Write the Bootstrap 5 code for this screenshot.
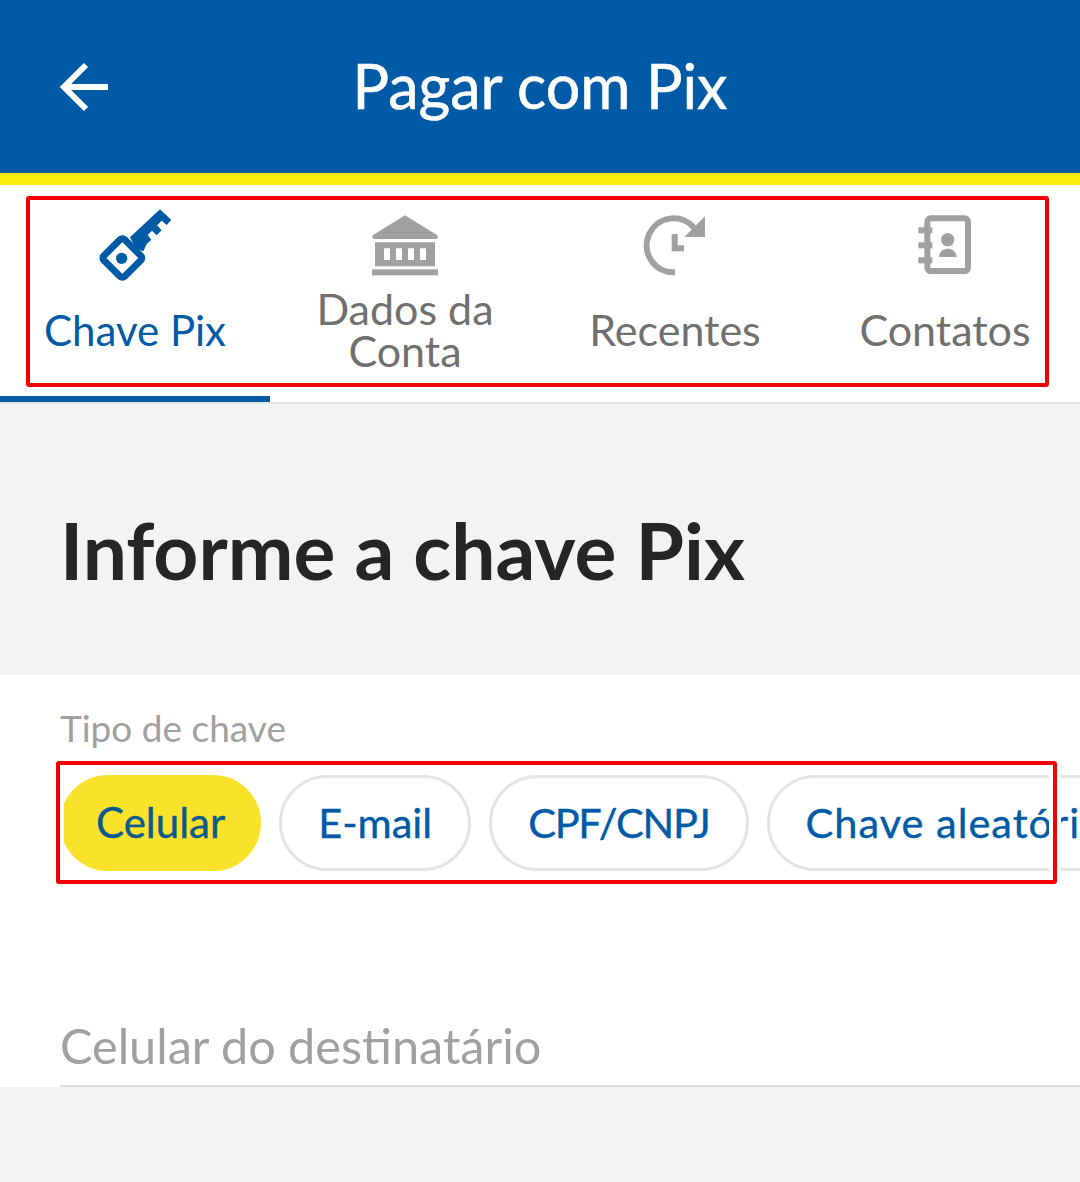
<!DOCTYPE html>
<html lang="pt-BR">
<head>
    <meta charset="UTF-8">
    <title>Pagar com Pix</title>
    <link rel="stylesheet" href="https://cdn.jsdelivr.net/npm/bootstrap@5.3.0/dist/css/bootstrap.min.css">
    <style>
        body { background-color: #f3f3f3; font-family: "Lato", "Liberation Sans", sans-serif; width: 1080px; height: 1182px; overflow: hidden; position: relative; }
        .pix-header { height: 185px; background-color: #005aa6; border-bottom: 12px solid #fcee0a; color: #fff; position: relative; }
        .pix-back { position: absolute; left: 60px; top: 62px; }
        .pix-title { font-size: 61px; line-height: 172px; margin: 0; font-weight: 400; -webkit-text-stroke: .6px #fff; }
        .pix-tabs { height: 219px; background-color: #fff; border-bottom: 2px solid #e3e3e3; }
        .pix-tab { width: 270px; height: 217px; color: #707070; font-size: 43px; line-height: 42px; padding-top: 23px; border-bottom: 6px solid transparent; }
        .pix-tab.is-active { color: #005aa6; border-bottom-color: #005aa6; font-size: 42px; }
        .pix-tab svg { display: block; flex: none; }
        .pix-tab-label { height: 84px; margin-top: 5px; }
        .pix-heading { height: 271px; padding: 22px 60px 0; font-size: 78.5px; font-weight: 700; color: #252525; margin: 0; }
        .pix-form { height: 412px; background-color: #fff; padding-left: 60px; overflow: hidden; }
        .pix-label { font-size: 37px; line-height: 40px; color: #a0a0a0; padding-top: 33px; box-sizing: content-box; height: 40px; }
        .pix-pills { margin-top: 27px; gap: 18px; width: max-content; }
        .pix-pill { height: 96px; border-radius: 48px; border: 3px solid #e4e4e4; background: #fff; color: #005aa6; font-size: 41.5px; padding: 0 36px 1px; white-space: nowrap; -webkit-text-stroke: .4px #005aa6; }
        .pix-pill.is-on { background-color: #fae12a; border-color: #fae12a; color: #0b5a8c; font-size: 42px; padding: 0 33px 1px; -webkit-text-stroke-color: #0b5a8c; }
        .pix-pill-tight { letter-spacing: -1.2px; }
        .pix-pill-wide { letter-spacing: 1px; }
        .pix-field { margin-top: 139px; font-size: 48.6px; color: #a0a0a0; border-bottom: 2px solid #dcdcdc; line-height: 70px; height: 77px; }
        .pix-mark { position: absolute; border: 4px solid #f20000; border-radius: 3px; box-shadow: 0 0 0 4px #fff, inset 0 0 0 4px #fff; }
        .pix-mark-tabs { left: 26px; top: 196px; width: 1023px; height: 191px; box-shadow: none; }
        .pix-mark-pills { left: 56px; top: 761px; width: 1001px; height: 123px; }
    </style>
</head>
<body>
    <header class="pix-header text-center">
        <svg class="pix-back" width="50" height="50" viewBox="0 0 50 50" fill="none" stroke="#fff" stroke-width="6">
            <path d="M48 25H5M26 3L4 25l22 22"/>
        </svg>
        <h1 class="pix-title">Pagar com Pix</h1>
    </header>

    <div class="pix-tabs d-flex">
        <div class="pix-tab is-active d-flex flex-column align-items-center text-center">
            <svg width="110" height="75" viewBox="0 24 330 225" fill="#005aa6">
                <rect x="83" y="130" width="88" height="88" rx="10" fill="none" stroke="#005aa6" stroke-width="21" transform="rotate(45 127 174)"/>
                <circle cx="125" cy="175" r="17"/>
                <path d="M150 112L240 28l34 32-14 15-15-13-14 14 14 15-15 15-14-14-13 13 11 14-14 13-10 22-24-10z"/>
            </svg>
            <div class="pix-tab-label d-flex align-items-center">Chave Pix</div>
        </div>
        <div class="pix-tab d-flex flex-column align-items-center text-center">
            <svg width="90" height="75" viewBox="0 0 270 225" fill="#a0a0a0">
                <path d="M135 22L232 82q5 11-6 11H44q-11 0-6-11z"/>
                <path d="M45 103H225V175H45zM72 121v35h18v-35zM108 121v35h18v-35zM144 121v35h18v-35zM180 121v35h18v-35z" fill-rule="evenodd"/>
                <rect x="36" y="184" width="198" height="18"/>
            </svg>
            <div class="pix-tab-label d-flex align-items-center">Dados da<br>Conta</div>
        </div>
        <div class="pix-tab d-flex flex-column align-items-center text-center">
            <svg width="80" height="75" viewBox="0 0 240 225" fill="#a0a0a0">
                <path d="M120 193A81 81 0 1 1 178 60" fill="none" stroke="#a0a0a0" stroke-width="18"/>
                <path d="M210 25v62h-62z"/>
                <path d="M110 78h18v34h19v18H110z"/>
            </svg>
            <div class="pix-tab-label d-flex align-items-center">Recentes</div>
        </div>
        <div class="pix-tab d-flex flex-column align-items-center text-center">
            <svg width="80" height="75" viewBox="0 0 240 225" fill="#a0a0a0">
                <rect x="67" y="31" width="122" height="158" rx="10" fill="none" stroke="#a0a0a0" stroke-width="18"/>
                <rect x="40" y="58" width="42" height="18"/>
                <rect x="40" y="103" width="42" height="18"/>
                <rect x="40" y="148" width="42" height="18"/>
                <circle cx="128" cy="95" r="20"/>
                <path d="M102 147c2-33 51-33 53 0z"/>
            </svg>
            <div class="pix-tab-label d-flex align-items-center">Contatos</div>
        </div>
    </div>

    <h2 class="pix-heading d-flex align-items-center">Informe a chave Pix</h2>

    <section class="pix-form">
        <div class="pix-label">Tipo de chave</div>
        <div class="pix-pills d-flex">
            <div class="pix-pill is-on d-flex align-items-center">Celular</div>
            <div class="pix-pill d-flex align-items-center">E-mail</div>
            <div class="pix-pill pix-pill-tight d-flex align-items-center">CPF/CNPJ</div>
            <div class="pix-pill pix-pill-wide d-flex align-items-center">Chave aleatória</div>
        </div>
        <div class="pix-field">Celular do destinatário</div>
    </section>

    <div class="pix-mark pix-mark-tabs"></div>
    <div class="pix-mark pix-mark-pills"></div>

    <script src="https://cdn.jsdelivr.net/npm/bootstrap@5.3.0/dist/js/bootstrap.bundle.min.js"></script>
</body>
</html>
